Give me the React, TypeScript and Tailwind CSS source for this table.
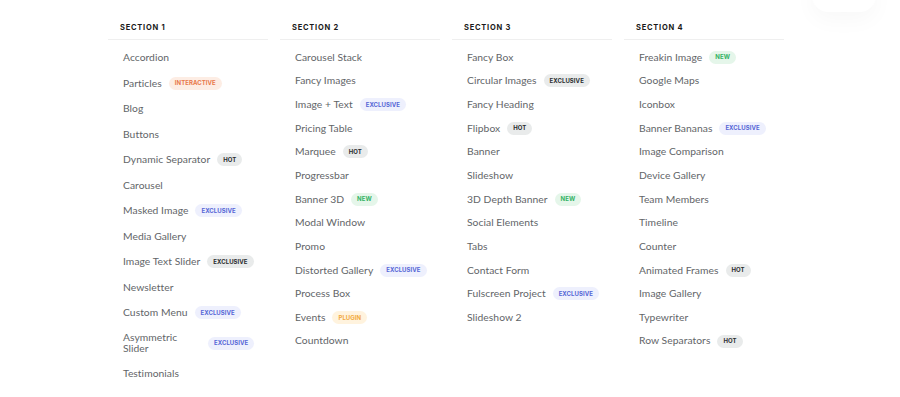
import React from "react";

type Tone = "hot" | "blue" | "gray" | "orange" | "green" | "yellow";

interface Item {
	label: string;
	badge?: string;
	tone?: Tone;
	wrap?: boolean;
}

const toneClass: Record<Tone, string> = {
	hot: "bg-[#e9ebeb] text-[#2a2d2f]",
	gray: "bg-[#e9ebeb] text-[#2a2d2f]",
	blue: "bg-[#eef0fd] text-[#5566d6]",
	orange: "bg-[#fdede4] text-[#e8784a]",
	green: "bg-[#e5f6ea] text-[#33b264]",
	yellow: "bg-[#fff3de] text-[#f2a93b]",
};

const sections: { title: string; rowH: string; items: Item[] }[] = [
	{
		title: "Section 1",
		rowH: "h-[25.5px]",
		items: [
			{ label: "Accordion" },
			{ label: "Particles", badge: "Interactive", tone: "orange" },
			{ label: "Blog" },
			{ label: "Buttons" },
			{ label: "Dynamic Separator", badge: "Hot", tone: "hot" },
			{ label: "Carousel" },
			{ label: "Masked Image", badge: "Exclusive", tone: "blue" },
			{ label: "Media Gallery" },
			{ label: "Image Text Slider", badge: "Exclusive", tone: "gray" },
			{ label: "Newsletter" },
			{ label: "Custom Menu", badge: "Exclusive", tone: "blue" },
			{ label: "Asymmetric Slider", badge: "Exclusive", tone: "blue", wrap: true },
			{ label: "Testimonials" },
		],
	},
	{
		title: "Section 2",
		rowH: "h-[23.67px]",
		items: [
			{ label: "Carousel Stack" },
			{ label: "Fancy Images" },
			{ label: "Image + Text", badge: "Exclusive", tone: "blue" },
			{ label: "Pricing Table" },
			{ label: "Marquee", badge: "Hot", tone: "hot" },
			{ label: "Progressbar" },
			{ label: "Banner 3D", badge: "New", tone: "green" },
			{ label: "Modal Window" },
			{ label: "Promo" },
			{ label: "Distorted Gallery", badge: "Exclusive", tone: "blue" },
			{ label: "Process Box" },
			{ label: "Events", badge: "Plugin", tone: "yellow" },
			{ label: "Countdown" },
		],
	},
	{
		title: "Section 3",
		rowH: "h-[23.67px]",
		items: [
			{ label: "Fancy Box" },
			{ label: "Circular Images", badge: "Exclusive", tone: "gray" },
			{ label: "Fancy Heading" },
			{ label: "Flipbox", badge: "Hot", tone: "hot" },
			{ label: "Banner" },
			{ label: "Slideshow" },
			{ label: "3D Depth Banner", badge: "New", tone: "green" },
			{ label: "Social Elements" },
			{ label: "Tabs" },
			{ label: "Contact Form" },
			{ label: "Fulscreen Project", badge: "Exclusive", tone: "blue" },
			{ label: "Slideshow 2" },
		],
	},
	{
		title: "Section 4",
		rowH: "h-[23.67px]",
		items: [
			{ label: "Freakin Image", badge: "New", tone: "green" },
			{ label: "Google Maps" },
			{ label: "Iconbox" },
			{ label: "Banner Bananas", badge: "Exclusive", tone: "blue" },
			{ label: "Image Comparison" },
			{ label: "Device Gallery" },
			{ label: "Team Members" },
			{ label: "Timeline" },
			{ label: "Counter" },
			{ label: "Animated Frames", badge: "Hot", tone: "hot" },
			{ label: "Image Gallery" },
			{ label: "Typewriter" },
			{ label: "Row Separators", badge: "Hot", tone: "hot" },
		],
	},
];

const Badge: React.FC<{ text: string; tone: Tone }> = ({ text, tone }) => (
	<span
		className={`inline-flex items-center h-[13px] px-[6px] rounded-full text-[6px] font-bold uppercase tracking-[0.01em] leading-none ${toneClass[tone]}`}
		style={{ fontFamily: "Inter, sans-serif" }}>
		{text}
	</span>
);

const Row: React.FC<{ item: Item; rowH: string }> = ({ item, rowH }) => (
	<li
		className={`flex items-center gap-[7px] pl-[15px] text-[10.3px] tracking-[0.005em] text-[#626568] ${
			item.wrap ? "h-[35.6px]" : rowH
		}`}>
		<span className={item.wrap ? "w-[78px] leading-[11px]" : "whitespace-nowrap"}>{item.label}</span>
		{item.badge && item.tone && <Badge text={item.badge} tone={item.tone} />}
	</li>
);

const App: React.FC = () => {
	return (
		<div
			className="relative w-[900px] h-[397px] bg-white overflow-hidden"
			style={{ fontFamily: "Lato, 'Open Sans', sans-serif" }}>
			<div className="absolute -top-[26px] right-[24px] w-[64px] h-[38px] rounded-2xl bg-white shadow-[0_8px_22px_rgba(0,0,0,0.03)]" />
			<div className="flex gap-3 pl-[108px] pt-[23px]">
				{sections.map((s) => (
					<div key={s.title} className="w-[160px]">
						<div
							className="pl-3 pb-[7px] border-b border-[#efefef] text-[7.5px] font-bold uppercase tracking-[0.1em] text-[#1a1a1a] leading-[9px]"
							style={{ fontFamily: "Inter, sans-serif" }}>
							{s.title}
						</div>
						<ul className={s.title === "Section 1" ? "pt-[5px]" : "pt-[5.5px]"}>
							{s.items.map((it) => (
								<Row key={it.label} item={it} rowH={s.rowH} />
							))}
						</ul>
					</div>
				))}
			</div>
		</div>
	);
};

export default App;
